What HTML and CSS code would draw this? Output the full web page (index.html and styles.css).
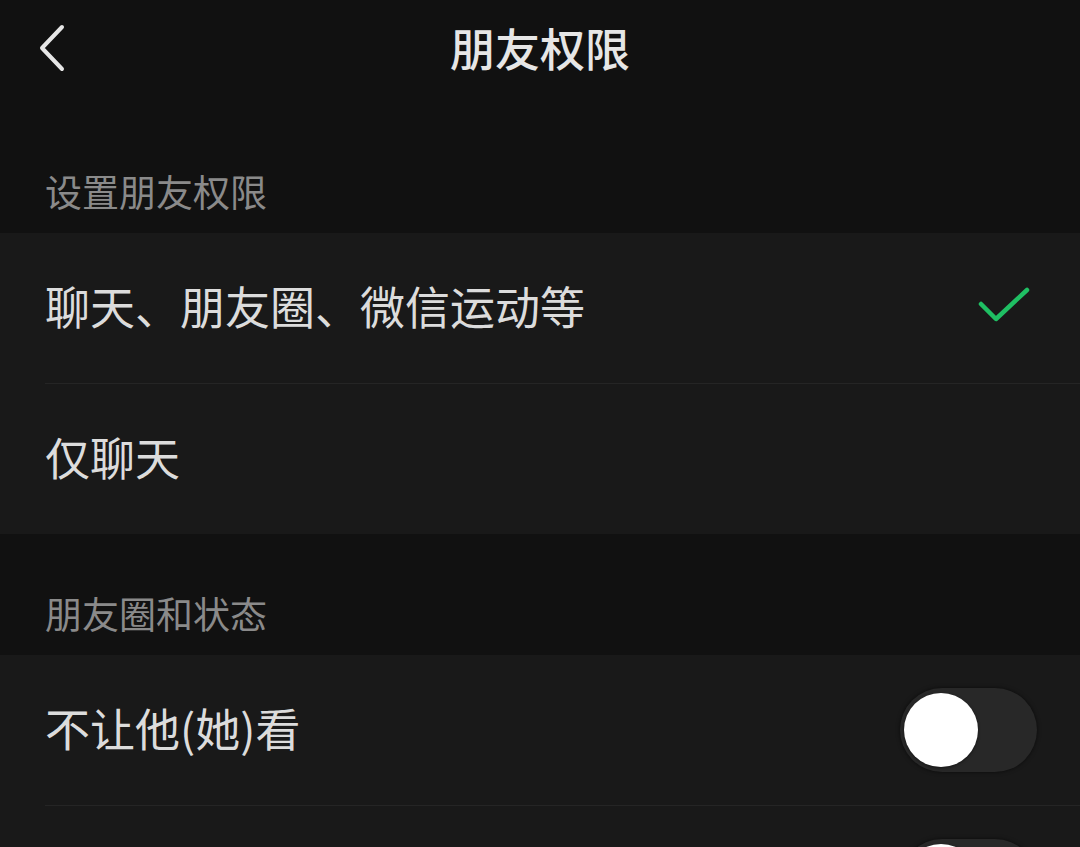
FILE: index.html
```html
<!DOCTYPE html>
<html lang="zh-CN">
<head>
<meta charset="utf-8">
<title>朋友权限</title>
<link rel="stylesheet" href="styles.css">
</head>
<body>
<div class="page">
  <header class="nav">
    <span class="back">
      <svg width="30" height="48" viewBox="0 0 30 48"><polyline points="24,3 4,24 24,45" fill="none" stroke="#e6e6e6" stroke-width="4" stroke-linecap="round" stroke-linejoin="round"/></svg>
    </span>
    <h1 class="title">朋友权限</h1>
  </header>

  <div class="section-title first">设置朋友权限</div>
  <div class="group">
    <div class="row">
      <span class="label">聊天、朋友圈、微信运动等</span>
      <svg class="check" width="56" height="40" viewBox="0 0 56 40"><polyline points="4,18 19,33 50,4" fill="none" stroke="#1fbf63" stroke-width="4.5" stroke-linecap="round" stroke-linejoin="round"/></svg>
    </div>
    <div class="divider"></div>
    <div class="row">
      <span class="label">仅聊天</span>
    </div>
  </div>

  <div class="section-title">朋友圈和状态</div>
  <div class="group">
    <div class="row">
      <span class="label">不让他(她)看</span>
      <span class="switch"><span class="knob"></span></span>
    </div>
    <div class="divider"></div>
    <div class="row row-end">
      <span class="switch"><span class="knob"></span></span>
    </div>
  </div>
</div>
</body>
</html>
```

FILE: styles.css
```css
html, body {
  margin: 0;
  padding: 0;
  background: #111111;
}
body {
  font-family: "Noto Sans CJK SC", "Noto Sans", sans-serif;
  color: #dcdcdc;
  width: 1080px;
  overflow: hidden;
}
.page {
  width: 1080px;
}
.nav {
  height: 96px;
  display: flex;
  align-items: center;
  justify-content: center;
  position: relative;
}
.back {
  position: absolute;
  left: 38px;
  top: 24px;
  width: 30px;
  height: 48px;
}
.title {
  margin: 0;
  font-size: 45px;
  font-weight: 500;
  color: #e6e6e6;
  line-height: 50px;
}
.section-title {
  height: 121px;
  box-sizing: border-box;
  display: flex;
  align-items: flex-end;
  padding: 0 0 17px 45px;
  font-size: 37px;
  line-height: 50px;
  color: #8a8a8a;
}
.section-title.first {
  height: 137px;
}
.group {
  background: #191919;
}
.row {
  height: 150px;
  display: flex;
  align-items: center;
  justify-content: space-between;
  padding: 0 43px 0 45px;
  box-sizing: border-box;
  padding-bottom: 4px;
}
.row-end {
  justify-content: flex-end;
}
.label {
  font-size: 45px;
  line-height: 56px;
  color: #dcdcdc;
}
.check {
  margin-right: 4px;
}
.divider {
  height: 1px;
  margin-left: 45px;
  background: #252525;
}
.switch {
  width: 137px;
  height: 84px;
  margin-top: 4px;
  border-radius: 42px;
  background: #282828;
  box-shadow: 0 0 4px rgba(0, 0, 0, 0.6);
  display: flex;
  align-items: center;
  padding-left: 4px;
  box-sizing: border-box;
}
.knob {
  width: 74px;
  height: 74px;
  border-radius: 50%;
  background: #ffffff;
  box-shadow: 0 1px 3px rgba(0, 0, 0, 0.5);
}
```
